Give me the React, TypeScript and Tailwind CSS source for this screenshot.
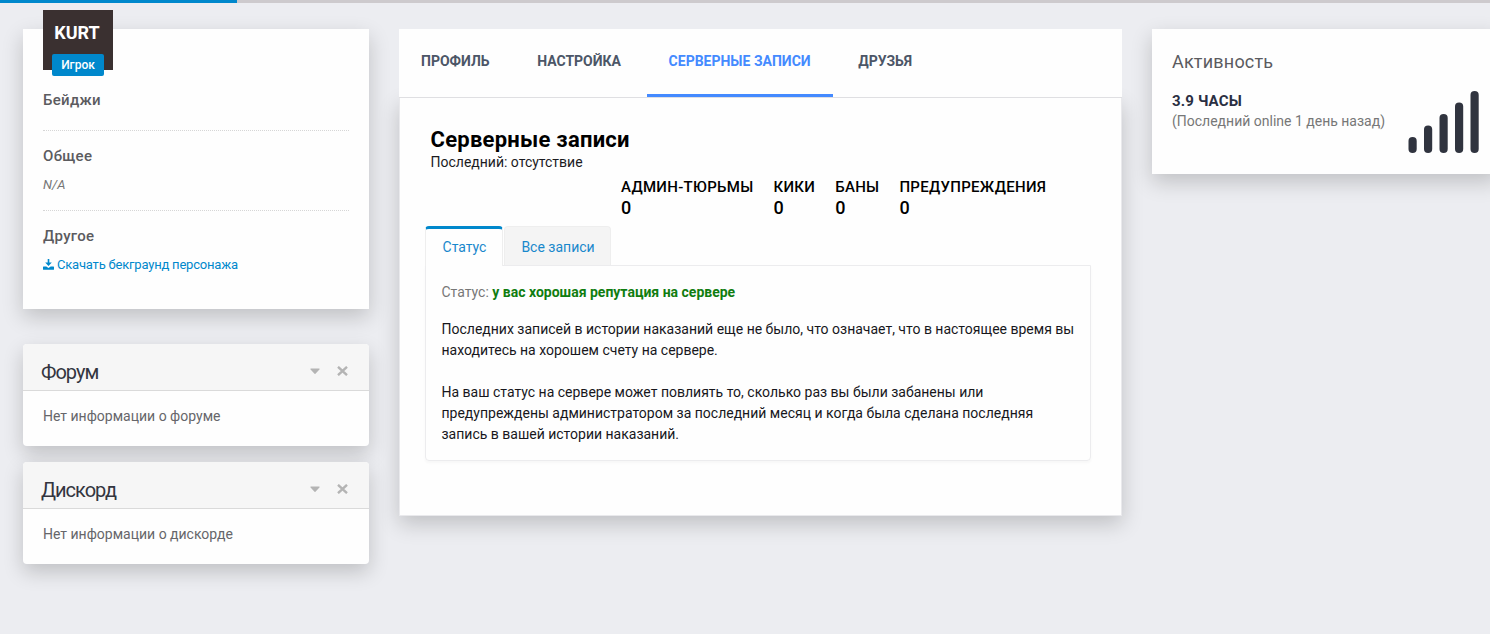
import { useState } from "react";
import { FaCaretDown } from "react-icons/fa";

const NAV = ["ПРОФИЛЬ", "НАСТРОЙКА", "СЕРВЕРНЫЕ ЗАПИСИ", "ДРУЗЬЯ"];

const STATS = [
  { label: "АДМИН-ТЮРЬМЫ", value: 0 },
  { label: "КИКИ", value: 0 },
  { label: "БАНЫ", value: 0 },
  { label: "ПРЕДУПРЕЖДЕНИЯ", value: 0 },
];

const BARS = [16, 27.5, 39, 50.5, 62];

const CARD_SHADOW = "shadow-[0_8px_20px_rgba(0,0,0,0.19)]";

function SectionTitle({ children }: { children: string }) {
  return <h5 className="text-[15px] leading-5 font-medium tracking-[0.3px] text-[#5b5b5f]">{children}</h5>;
}

function InfoPanel({ title, text }: { title: string; text: string }) {
  return (
    <section className={`h-[102px] rounded-[4px] bg-[#fefefe] ${CARD_SHADOW}`}>
      <header className="flex h-[47px] items-center justify-between rounded-t-[4px] border-b border-[#dadada] bg-[#f6f6f6] pt-[10px] pr-[21px] pl-[18px]">
        <h2 className="text-[20px] leading-6 tracking-[-1px] text-[#33353f]">{title}</h2>
        <div className="flex items-center gap-[17px] pb-[3px] text-[#b4b4b4]">
          <button aria-label="Свернуть">
            <FaCaretDown className="h-[17px] w-[10px]" preserveAspectRatio="none" />
          </button>
          <button aria-label="Закрыть">
            <svg className="h-[10px] w-[11px]" viewBox="0 0 11 10" fill="none" stroke="currentColor" strokeWidth="2.4">
              <path d="M1 .8l9 8.4M10 .8L1 9.2" />
            </svg>
          </button>
        </div>
      </header>
      <p className="px-5 pt-[15px] text-[14px] leading-[21px] text-[#66666a]">{text}</p>
    </section>
  );
}

function ProfileCard() {
  return (
    <section className={`relative h-[280px] bg-[#fefefe] px-5 pt-[61px] ${CARD_SHADOW}`}>
      {/* Avatar sticks out over the card's top edge */}
      <div className="absolute -top-[19px] left-5 flex h-[60px] w-[70px] flex-col items-center bg-[#3a3030] pt-[11px]">
        <span className="-ml-[2px] text-[18px] leading-6 font-bold text-white">KURT</span>
        <span className="mt-[9px] flex h-[22px] w-[52px] shrink-0 items-center justify-center rounded-[2px] bg-[#0088cc] text-[12px] font-medium text-white">
          Игрок
        </span>
      </div>

      <div className="border-b border-dotted border-[#d6d6d6] pb-5">
        <SectionTitle>Бейджи</SectionTitle>
      </div>
      <div className="border-b border-dotted border-[#d6d6d6] py-[15px]">
        <SectionTitle>Общее</SectionTitle>
        <p className="mt-[9px] text-[13px] leading-5 text-[#777] italic">N/A</p>
      </div>
      <div className="pt-[15px]">
        <SectionTitle>Другое</SectionTitle>
        <a href="#" className="mt-[9px] flex items-center gap-[3px] text-[13px] leading-5 tracking-[-0.2px] text-[#0088cc]">
          <svg className="-mt-[2px] h-[11px] w-[11px]" viewBox="0 0 11 11" fill="currentColor">
            <path d="M4.7 0h1.6v3.6h2.5L5.5 7 2.2 3.6h2.5z" />
            <path d="M.6 7.4h2.7l2.2 1.5 2.2-1.5h2.7q.6 0 .6.6v2.2q0 .6-.6.6H.6q-.6 0-.6-.6V8q0-.6.6-.6z" />
          </svg>
          Скачать бекграунд персонажа
        </a>
      </div>
    </section>
  );
}

function Records() {
  const [tab, setTab] = useState(0);

  return (
    <section className={`h-[418px] border-x border-b border-[#e9e9ec] bg-[#fefefe] px-[25px] pt-[28px] ${CARD_SHADOW}`}>
      <div className="pl-[5.5px]">
        <h1 className="text-[22px] leading-7 font-bold tracking-[0.25px] text-black">Серверные записи</h1>
        <p className="-mt-[2px] text-[14px] leading-[21px] text-[#1b1b1f]">Последний: отсутствие</p>
      </div>

      <div className="mt-1 flex gap-5 pl-[196px] text-black">
        {STATS.map((s) => (
          <div key={s.label}>
            <p className="text-[15px] leading-5 font-medium tracking-[0.3px]">{s.label}</p>
            <p className="text-[18px] leading-[22px] font-medium">{s.value}</p>
          </div>
        ))}
      </div>

      <div className="mt-[7px] flex items-end gap-px text-[14px] text-[#1988cc]">
        {["Статус", "Все записи"].map((label, i) => (
          <button
            key={label}
            onClick={() => setTab(i)}
            className={
              i === tab
                ? "relative -mb-px h-10 w-[78px] rounded-t-[4px] border-x border-t-[3px] border-[#eee] border-t-[#0088cc] bg-[#fefefe] pl-px"
                : "h-[39px] w-[107px] rounded-t-[4px] border border-b-0 border-[#eee] bg-[#f4f4f4] pt-[2px] pl-px"
            }
          >
            {label}
          </button>
        ))}
      </div>
      <div className="h-[196px] w-[666px] rounded-b-[4px] border border-[#ececee] px-[15.5px] pt-[16px] text-[14px] leading-[21px] whitespace-nowrap text-[#17171c] shadow-[0_2px_3px_rgba(0,0,0,0.03)]">
        <p className="text-[#777]">
          Статус: <strong className="font-bold text-[#107d10]">у вас хорошая репутация на сервере</strong>
        </p>
        <p className="mt-4">
          Последних записей в истории наказаний еще не было, что означает, что в настоящее время вы
          <br />
          находитесь на хорошем счету на сервере.
        </p>
        <p className="mt-[21px]">
          На ваш статус на сервере может повлиять то, сколько раз вы были забанены или
          <br />
          предупреждены администратором за последний месяц и когда была сделана последняя
          <br />
          запись в вашей истории наказаний.
        </p>
      </div>
    </section>
  );
}

function Activity() {
  return (
    <section className={`flex h-[145px] w-[346px] shrink-0 bg-[#fefefe] px-5 pt-[22px] ${CARD_SHADOW}`}>
      <div className="w-[236px] shrink-0 whitespace-nowrap">
        <h4 className="text-[18px] leading-[22px] tracking-[0.2px] text-[#5b5b5f]">Активность</h4>
        <p className="mt-[18px] text-[15px] leading-5 font-bold tracking-[0.15px] text-[#2a2f42]">3.9 ЧАСЫ</p>
        <p className="text-[14px] leading-[21px] text-[#777]">(Последний online 1 день назад)</p>
      </div>
      <svg className="mt-10 h-[62px] w-[72px] shrink-0" viewBox="0 0 72 62" fill="#30343f">
        {BARS.map((h, i) => (
          <rect key={h} x={0.5 + i * 15.5} y={62 - h} width="8.2" height={h} rx="4.1" />
        ))}
      </svg>
    </section>
  );
}

export default function App() {
  const [page, setPage] = useState(2);

  return (
    <div className="h-[634px] w-full overflow-hidden bg-[#ecedf1] [font-family:Roboto,'Noto_Sans',sans-serif]">
      <div className="h-[3px] bg-[#cdcacd]">
        <div className="h-full w-[237px] bg-[#0088cc]" />
      </div>

      <main className="flex items-start gap-[30px] pt-[26px] pl-[23px]">
        <aside className="w-[346px] shrink-0">
          <ProfileCard />
          <div className="mt-[35px] flex flex-col gap-4">
            <InfoPanel title="Форум" text="Нет информации о форуме" />
            <InfoPanel title="Дискорд" text="Нет информации о дискорде" />
          </div>
        </aside>

        <div className="w-[723px] shrink-0">
          <nav className="relative flex h-[69px] gap-[3.6px] border-b border-[#dfdfe2] bg-[#fefefe]">
            {NAV.map((label, i) => (
              <button
                key={label}
                onClick={() => setPage(i)}
                className={
                  i === page
                    ? "border-b-[3px] border-[#448aff] px-[22px] text-[14px] font-bold text-[#448aff]"
                    : "border-b-[3px] border-transparent px-[22px] text-[14px] font-bold text-[#4c5667]"
                }
              >
                {label}
              </button>
            ))}
          </nav>
          <Records />
        </div>

        <Activity />
      </main>
    </div>
  );
}
